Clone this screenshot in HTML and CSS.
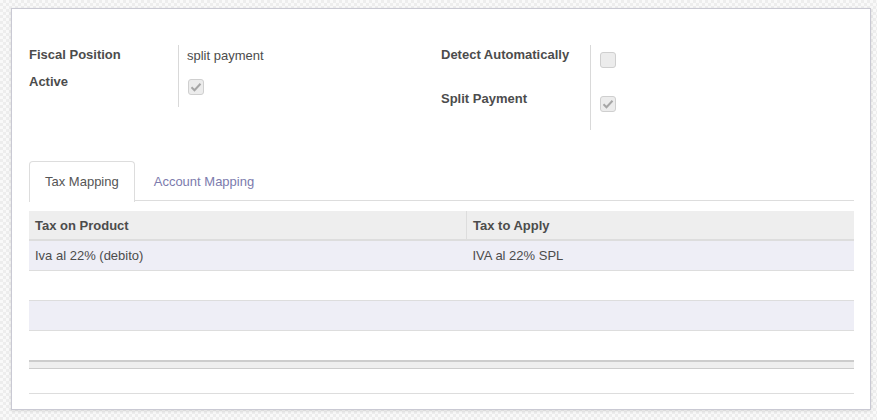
FILE: index.html
```html
<!DOCTYPE html>
<html lang="en">
<head>
  <meta charset="UTF-8">
  <title>Fiscal Position</title>
  <link rel="stylesheet" href="styles.css">
</head>
<body>

  <div class="sheet">
    <div class="groups">
      <div class="group group-left">
        <div class="label">Fiscal Position</div>
        <div class="field">split payment</div>
        <div class="label">Active</div>
        <div class="field"><span class="check checked"><svg viewBox="0 0 16 16" width="16" height="16"><path d="M3.5 8.2l3 3 6-6.4" fill="none" stroke="#a6a6a6" stroke-width="2"/></svg></span></div>
      </div>
      <div class="group group-right">
        <div class="label">Detect Automatically</div>
        <div class="field"><span class="check"></span></div>
        <div class="label">Split Payment</div>
        <div class="field"><span class="check checked"><svg viewBox="0 0 16 16" width="16" height="16"><path d="M3.5 8.2l3 3 6-6.4" fill="none" stroke="#a6a6a6" stroke-width="2"/></svg></span></div>
      </div>
    </div>

    <ul class="tabs">
      <li class="tab active">Tax Mapping</li>
      <li class="tab">Account Mapping</li>
    </ul>

    <table class="list">
      <thead>
        <tr>
          <th class="col-src">Tax on Product</th>
          <th>Tax to Apply</th>
        </tr>
      </thead>
      <tbody>
        <tr class="odd"><td>Iva al 22% (debito)</td><td>IVA al 22% SPL</td></tr>
        <tr><td></td><td></td></tr>
        <tr class="odd"><td></td><td></td></tr>
        <tr><td></td><td></td></tr>
      </tbody>
      <tfoot>
        <tr><td colspan="2"></td></tr>
      </tfoot>
    </table>

    <div class="bottom-line"></div>
  </div>

</body>
</html>
```

FILE: styles.css
```css
body {
  margin: 0;
  font-family: "Liberation Sans", Arial, sans-serif;
  font-size: 13px;
  color: #4c4c4c;
  background-color: #f7f7f7;
  background-image: repeating-conic-gradient(#ededed 0 25%, #f9f9f9 0 50%);
  background-size: 6px 6px;
  height: 420px;
  overflow: hidden;
}

.sheet {
  margin: 8px 0 0 11px;
  width: 825px;
  height: 400px;
  padding: 0 16px 0 17px;
  background: #fff;
  border: 1px solid #c9c9d3;
  box-shadow: 0 1px 3px rgba(0, 0, 0, 0.12);
}

.groups {
  display: grid;
  grid-template-columns: 412px 1fr;
  padding-top: 36px;
}

.group {
  display: grid;
  grid-template-columns: 149px 1fr;
}

.group-left {
  grid-template-rows: 27px 35px;
}

.group-right {
  grid-template-rows: 44px 41px;
}

.label {
  font-weight: bold;
  line-height: 18px;
  padding-top: 1px;
}

.field {
  border-left: 1px solid #d9d9d9;
  padding-left: 8px;
  line-height: 18px;
  padding-top: 2px;
}

.check {
  display: inline-block;
  width: 14px;
  height: 14px;
  margin: 5px 0 0 1px;
  border: 1px solid #cfcfcf;
  border-radius: 3px;
  background: #ececec;
  position: relative;
}

.check svg {
  position: absolute;
  left: -1px;
  top: -1px;
}

.tabs {
  list-style: none;
  margin: 31px 0 0;
  padding: 0;
  display: flex;
  border-bottom: 1px solid #dddddd;
  height: 39px;
}

.tab {
  padding: 0 15px;
  line-height: 39px;
  margin-right: 3px;
  color: #7c7bad;
  border: 1px solid transparent;
  border-bottom: none;
  border-radius: 4px 4px 0 0;
}

.tab.active {
  color: #555;
  background: #fff;
  border-color: #dddddd;
  height: 40px;
}

.list {
  width: 100%;
  margin-top: 10px;
  border-collapse: collapse;
}

.list th {
  background: #eeeeee;
  text-align: left;
  font-weight: bold;
  height: 28px;
  padding: 0 6px;
  border-bottom: 2px solid #dddddd;
}

.list th + th {
  border-left: 1px solid #dddddd;
}

.col-src {
  width: 425px;
}

.list td {
  height: 29px;
  padding: 0 6px;
  border-bottom: 1px solid #dddddd;
}

.list tr.odd td {
  background: #eeeef6;
}

.list tfoot td {
  height: 6px;
  padding: 0;
  background: #eeeeee;
  border-top: 2px solid #cccccc;
  border-bottom: 1px solid #cccccc;
}

.bottom-line {
  margin-top: 24px;
  border-top: 1px solid #dddddd;
}
```
